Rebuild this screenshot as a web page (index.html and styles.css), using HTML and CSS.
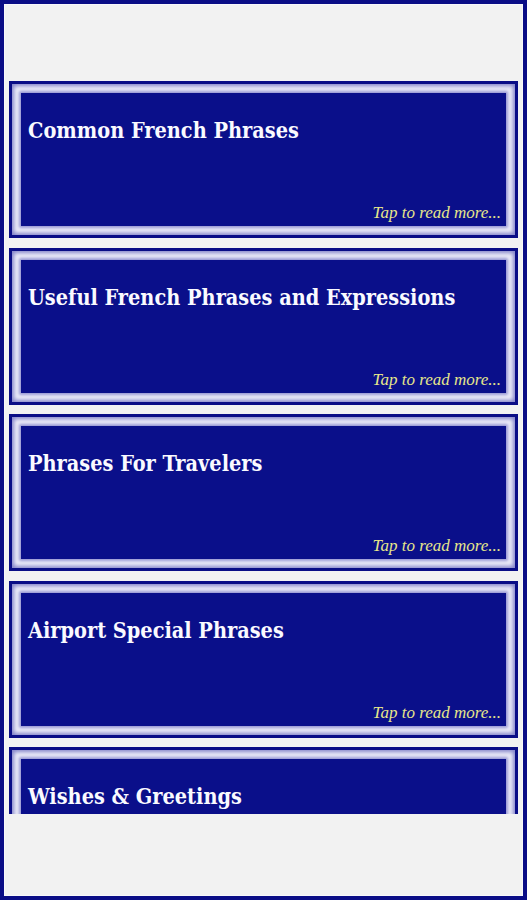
FILE: index.html
```html
<!DOCTYPE html>
<html lang="en">
<head>
  <meta charset="UTF-8" />
  <meta name="viewport" content="width=device-width, initial-scale=1.0"/>
  <title>French Phrases</title>
  <link rel="stylesheet" href="styles.css">
</head>
<body>
  <div class="frame">
    <div class="screen">
      <div class="top-space"></div>

      <div class="list">
        <div class="card">
          <div class="card-body">
            <h2>Common French Phrases</h2>
            <div class="more">Tap to read more...</div>
          </div>
        </div>

        <div class="card">
          <div class="card-body">
            <h2>Useful French Phrases and Expressions</h2>
            <div class="more">Tap to read more...</div>
          </div>
        </div>

        <div class="card">
          <div class="card-body">
            <h2>Phrases For Travelers</h2>
            <div class="more">Tap to read more...</div>
          </div>
        </div>

        <div class="card">
          <div class="card-body">
            <h2>Airport Special Phrases</h2>
            <div class="more">Tap to read more...</div>
          </div>
        </div>

        <!-- последняя карточка обрезана краем списка -->
        <div class="card">
          <div class="card-body">
            <h2>Wishes &amp; Greetings</h2>
          </div>
        </div>
      </div>
    </div>
  </div>
</body>
</html>
```

FILE: styles.css
```css
body {
  margin: 0;
  background: #0a0d86;
}

.frame {
  height: 900px;
  box-sizing: border-box;
  border: 4px solid #0a0d86;
}

.screen {
  height: 100%;
  box-sizing: border-box;
  border: 1px solid #f8f8fb;
  background: #f2f2f2;
  display: flex;
  flex-direction: column;
}

.top-space {
  height: 76px;
  flex-shrink: 0;
}

.list {
  height: 733px;
  overflow: hidden;
  padding: 0 4px;
  display: flex;
  flex-direction: column;
  gap: 9.5px;
}

.card {
  flex-shrink: 0;
  height: 157px;
  box-sizing: border-box;
  border: 3px solid #0a0d86;
  padding: 9px;
  background: #f2f2fb;
  box-shadow: inset 0 0 4px 2px #8080c8;
}

.card-body {
  height: 100%;
  box-sizing: border-box;
  background: #0a0f8a;
  box-shadow: 0 0 3px 2px #9494d2;
  padding: 0 5px 0 7px;
  display: flex;
  flex-direction: column;
}

.card-body h2 {
  margin: 25px 0 0;
  font-family: "DejaVu Serif Condensed", "DejaVu Serif", serif;
  font-stretch: condensed;
  font-size: 21.5px;
  font-weight: bold;
  color: #fafaff;
  flex: 1;
}

.more {
  text-align: right;
  font-family: "Liberation Serif", serif;
  font-style: italic;
  font-size: 17px;
  color: #e6e68a;
  margin-bottom: 3px;
}
```
